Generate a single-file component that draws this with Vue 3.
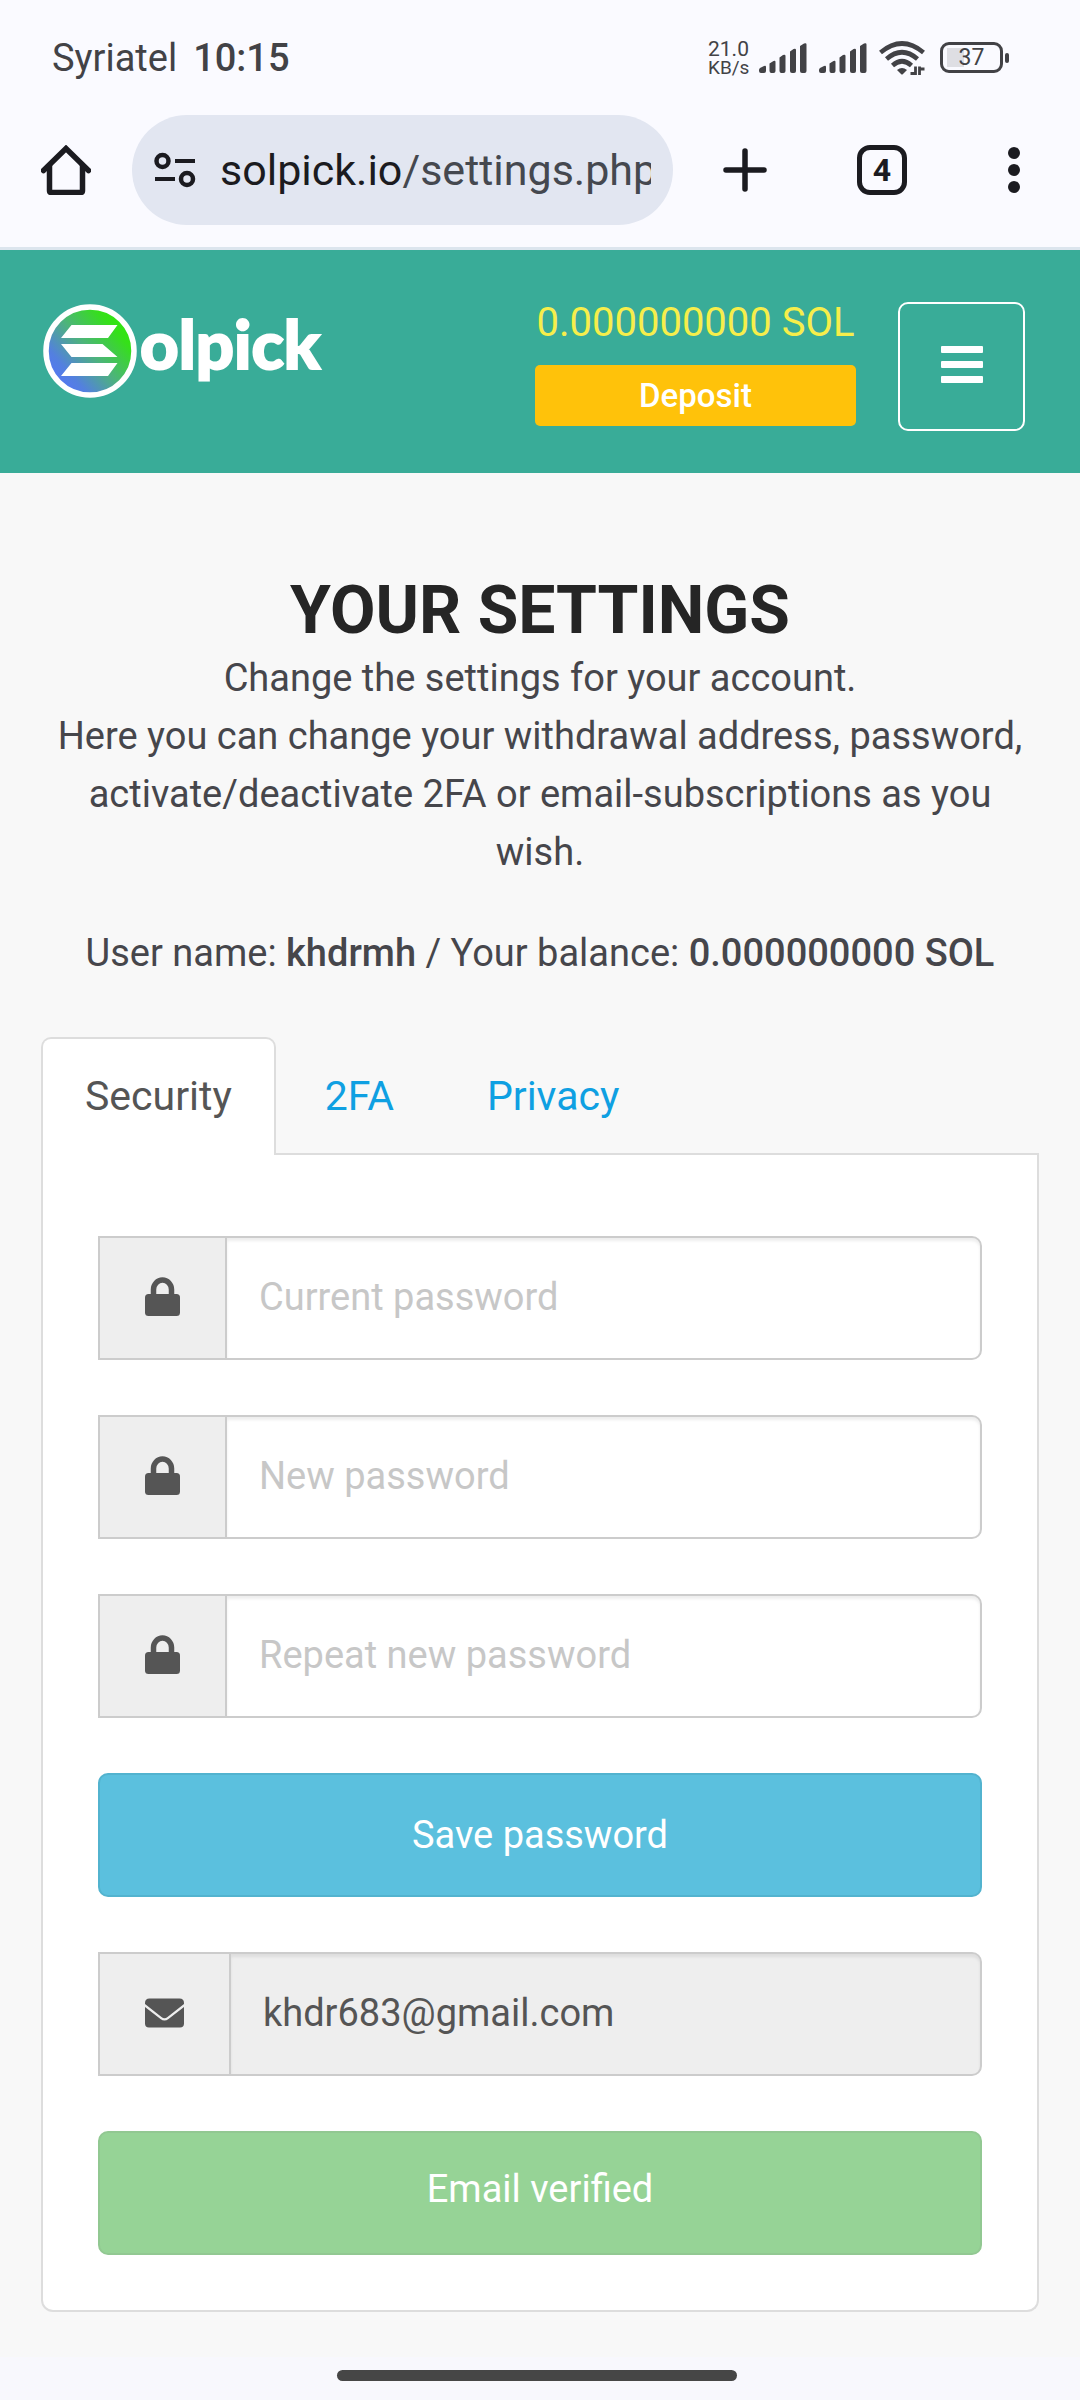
<script setup>
import { ref } from 'vue'

const tabs = ['Security', '2FA', 'Privacy']
const activeTab = ref('Security')

const passwordFields = [
  { id: 'current', label: 'Current password' },
  { id: 'new', label: 'New password' },
  { id: 'repeat', label: 'Repeat new password' },
]
</script>

<template>
  <div class="screen">
    <div class="status">
      <span class="carrier">Syriatel</span>
      <span class="clock">10:15</span>
      <div class="indicators">
        <div class="speed"><span class="rate">21.0</span><span class="unit">KB/s</span></div>
        <svg v-for="n in 2" :key="n" class="signal" width="48" height="30" viewBox="0 0 48 30" fill="#424246">
          <path d="M0 27q0-1 1-2l4-2q2-1 2 1v4q0 2-2 2H2q-2 0-2-2zM10.500 20.500l4-2.500q2-1 2 1v9q0 2-2 2h-2q-2 0-2-2zM20.500 14.500l3.500-2.500q2.500-1 2.500 1v15q0 2-2 2h-2q-2 0-2-2zM31 8.500l3.500-2.500q2.500-1 2.500 1v21q0 2-2 2h-2q-2 0-2-2zM41 3l4-2.500q2.500-1 2.500 1V28q0 2-2 2H43q-2 0-2-2z" />
        </svg>
        <svg class="wifi" width="46" height="34" viewBox="0 0 46 34">
          <g fill="none" stroke="#424246" stroke-width="4.600">
            <path d="M1.500 11.500Q23-6.500 44.500 11.500" />
            <path d="M7.500 18Q23 4.500 38.500 18" />
            <path d="M13.500 24.500Q23 16 32.500 24.500" />
          </g>
          <path d="M18 29q5-4 10 0l-4 4q-1 1-2 0z" fill="#424246" />
          <path d="M36.500 34V25.500M40.500 25.500V34M36.500 32.500h-5M40.500 28h5" stroke="#424246" stroke-width="2.800" fill="none" />
        </svg>
        <div class="battery"><span class="cell">37</span><span class="nub"></span></div>
      </div>
    </div>

    <div class="toolbar">
      <button class="plain home" aria-label="Home">
        <svg width="50" height="50" viewBox="0 0 50 50" fill="none" stroke="#1b1b20" stroke-width="5.500">
          <path d="M8.500 20V45.500q0 2 2 2h29q2 0 2-2V20" />
          <path d="M2.500 25.500L25 3.500 47.500 25.500" stroke-linecap="round" />
        </svg>
      </button>
      <div class="address">
        <svg class="tune" width="42" height="36" viewBox="0 0 42 36" fill="none" stroke="#1b1b20">
          <circle cx="8.500" cy="9" r="6" stroke-width="4.500" />
          <circle cx="33" cy="27" r="6" stroke-width="4.500" />
          <path d="M21 9h20M1 27h20" stroke-width="4" />
        </svg>
        <span class="url">solpick.io<span class="path">/settings.php</span></span>
      </div>
      <button class="plain add" aria-label="New tab">
        <svg width="44" height="44" viewBox="0 0 44 44" stroke="#1b1b20" stroke-width="5.500" stroke-linecap="round"><path d="M22 3v38M3 22h38" /></svg>
      </button>
      <button class="count" aria-label="Open tabs">4</button>
      <button class="plain more" aria-label="More">
        <svg width="12" height="46" viewBox="0 0 12 46" fill="#1b1b20"><circle cx="6" cy="6" r="6" /><circle cx="6" cy="23" r="6" /><circle cx="6" cy="40" r="6" /></svg>
      </button>
    </div>

    <header class="site-header">
      <a href="#" class="logo" aria-label="Solpick">
        <svg width="286" height="96" viewBox="0 0 286 96">
          <defs>
            <linearGradient id="sol" x1="0.100" y1="0.850" x2="0.900" y2="0.150">
              <stop offset="0" stop-color="#5577f5" />
              <stop offset="0.180" stop-color="#5380df" />
              <stop offset="0.500" stop-color="#4db37c" />
              <stop offset="0.850" stop-color="#35e019" />
              <stop offset="1" stop-color="#2fe80c" />
            </linearGradient>
          </defs>
          <circle cx="47" cy="49" r="44" fill="url(#sol)" stroke="#fff" stroke-width="5.500" />
          <path d="M28.500 23h46L65 36H18zM18 42h41.500l15 13h-46zM28.500 61h46L65 74H18z" fill="#fff" />
          <text x="97" y="67" class="wordmark">olpick</text>
        </svg>
      </a>
      <div class="wallet">
        <span class="amount">0.000000000 SOL</span>
        <button class="deposit">Deposit</button>
      </div>
      <button class="menu" aria-label="Menu"><span></span><span></span><span></span></button>
    </header>

    <main>
      <h1>YOUR SETTINGS</h1>
      <p class="intro">
        Change the settings for your account.<br />Here you can change your withdrawal address, password, activate/deactivate 2FA or email-subscriptions as you wish.
      </p>
      <p class="user">User name: <strong>khdrmh</strong> / Your balance: <strong>0.000000000 SOL</strong></p>

      <nav class="tabs">
        <a v-for="tab in tabs" :key="tab" href="#" :class="{ active: tab === activeTab }" @click.prevent="activeTab = tab">{{ tab }}</a>
      </nav>

      <form class="panel" @submit.prevent>
        <div v-for="field in passwordFields" :key="field.id" class="group">
          <label :for="field.id" :aria-label="field.label">
            <svg width="35" height="40" viewBox="0 0 35 40">
              <path d="M8.500 19V12.500a9 9.500 0 0 1 18 0V19" fill="none" stroke="#555" stroke-width="5.500" />
              <rect y="17" width="35" height="22" rx="3.500" fill="#555" />
            </svg>
          </label>
          <input :id="field.id" type="password" :placeholder="field.label" />
        </div>
        <button class="btn save">Save password</button>
        <div class="group">
          <label for="email" aria-label="Email">
            <svg width="39" height="30" viewBox="0 0 39 30" fill="#555">
              <path d="M0 5q0-4.500 4.500-4.500h30Q39 .5 39 5v1L22.500 19q-3 2.500-6 0L0 6z" />
              <path d="M0 9l15.500 12q4 3 8 0L39 9v16.500q0 4-4 4H4q-4 0-4-4z" />
            </svg>
          </label>
          <input id="email" type="email" value="khdr683@gmail.com" disabled />
        </div>
        <button class="btn verified" disabled>Email verified</button>
      </form>
    </main>

    <div class="gesture"><span></span></div>
  </div>
</template>

<style>
body {
  margin: 0;
  background: #f8f8f8;
}
</style>

<style scoped>
.screen,
.screen * {
  box-sizing: border-box;
}
.screen {
  display: flex;
  flex-direction: column;
  min-height: 100vh;
  font-family: Roboto, "Liberation Sans", sans-serif;
  font-size: 38px;
  line-height: 58px;
  color: #46464b;
  background: #f8f8f8;
}
button,
input {
  font: inherit;
  margin: 0;
}
svg {
  display: block;
  flex: none;
}
a {
  text-decoration: none;
}
.status {
  display: flex;
  align-items: center;
  height: 115px;
  padding: 0 71px 0 52px;
  background: #fafaff;
  color: #424246;
}
.clock {
  margin-left: 16px;
  font-weight: 500;
}
.indicators {
  display: flex;
  align-items: center;
  margin-left: auto;
}
.speed {
  display: flex;
  flex-direction: column;
  width: 42px;
  margin-right: 9px;
  white-space: nowrap;
}
.rate {
  font-size: 21px;
  line-height: 20px;
}
.unit {
  font-size: 19px;
  line-height: 18px;
}
.signal {
  margin-right: 12px;
}
.battery {
  display: flex;
  align-items: center;
  gap: 2px;
  margin-left: 15px;
}
.cell {
  width: 63px;
  height: 31px;
  border: 3px solid #424246;
  border-radius: 9px;
  background: linear-gradient(#dedee3, #dedee3) 4px center / 17px 19px no-repeat;
  font-size: 23px;
  line-height: 26px;
  text-align: center;
}
.nub {
  width: 4px;
  height: 10px;
  border-radius: 2px;
  background: #424246;
}
.toolbar {
  display: flex;
  align-items: center;
  padding: 0 60px 22px 41px;
  background: #fafaff;
  border-bottom: 3px solid #dce5ee;
}
.plain {
  padding: 0;
  border: 0;
  background: none;
}
.address {
  display: flex;
  align-items: center;
  flex: 1;
  min-width: 0;
  height: 110px;
  margin: 0 50px 0 41px;
  padding: 0 22px;
  border-radius: 55px;
  background: #e2e6f1;
}
.url {
  flex: 1;
  min-width: 0;
  margin-left: 24px;
  overflow: hidden;
  white-space: nowrap;
  font-size: 43px;
  color: #1b1b20;
}
.path {
  color: #45484f;
}
.count {
  width: 50px;
  height: 50px;
  margin: 0 101px 0 90px;
  padding: 0;
  border: 5px solid #1b1b20;
  border-radius: 13px;
  background: none;
  color: #1b1b20;
  font-size: 32px;
  font-weight: 700;
  line-height: 40px;
}
.site-header {
  display: flex;
  align-items: flex-start;
  padding: 52px 55px 42px 43px;
  background: #39ac98;
}
.wordmark {
  font-family: Lato, sans-serif;
  font-size: 67px;
  font-weight: 900;
  fill: #fff;
  stroke: #fff;
  stroke-width: 2px;
}
.wallet {
  display: flex;
  flex-direction: column;
  gap: 21px;
  min-width: 321px;
  margin: 0 42px 0 auto;
}
.amount {
  font-size: 40px;
  line-height: 42px;
  text-align: center;
  color: #f6ee4b;
}
.deposit {
  height: 61px;
  padding: 0;
  border: 0;
  border-radius: 5px;
  background: #ffc20a;
  color: #fff;
  font-size: 33px;
  font-weight: 500;
  line-height: 56px;
}
.menu {
  display: flex;
  flex-direction: column;
  align-items: center;
  justify-content: center;
  gap: 8px;
  width: 127px;
  height: 129px;
  padding: 0 0 4px;
  border: 2px solid #fff;
  border-radius: 10px;
  background: none;
}
.menu span {
  width: 42px;
  height: 7px;
  border-radius: 1px;
  background: #fff;
}
main {
  flex: 1;
  padding: 99px 41px 45px;
}
h1 {
  margin: 0;
  font-size: 66px;
  font-weight: 700;
  line-height: 78px;
  text-align: center;
  color: #252525;
}
p {
  margin: 0;
  text-align: center;
}
.intro {
  margin-top: -1px;
}
.user {
  margin: 43px 0 55px;
}
strong {
  font-weight: 500;
}
.tabs {
  display: flex;
  gap: 5px;
  border-bottom: 2px solid #ddd;
}
.tabs a {
  padding: 28px 42px 30px;
  margin-bottom: -2px;
  border: 2px solid transparent;
  border-bottom: 0;
  border-radius: 10px 10px 0 0;
  font-size: 41px;
  color: #0fa0e2;
}
.tabs .active {
  background: #fff;
  border-color: #ddd;
  color: #555;
}
.panel {
  display: flex;
  flex-direction: column;
  gap: 55px;
  padding: 81px 55px 55px;
  border: 2px solid #ddd;
  border-top: 0;
  border-radius: 0 0 12px 12px;
  background: #fff;
}
.group {
  display: flex;
  height: 124px;
}
.group label {
  display: flex;
  align-items: center;
  padding: 0 45px 2px;
  border: 2px solid #ccc;
  border-right: 0;
  background: #eee;
}
.group input {
  flex: 1;
  min-width: 0;
  padding: 0 32px 2px;
  border: 2px solid #ccc;
  border-radius: 0 10px 10px 0;
  background: #fff;
  box-shadow: inset 0 3px 3px rgba(0, 0, 0, 0.07);
  color: #555;
}
.group input::placeholder {
  color: #c7c7c7;
  opacity: 1;
}
.group input:disabled {
  background: #eee;
}
.btn {
  height: 124px;
  border: 2px solid;
  border-radius: 10px;
  color: #fff;
}
.save {
  padding: 0;
  border-color: #52b3cf;
  background: #5bc0de;
}
.verified {
  padding: 0 0 8px;
  border-color: #92c892;
  background: #96d396;
}
.gesture {
  display: flex;
  justify-content: center;
  height: 43px;
  padding: 13px 7px 0 0;
  background: #f8f8fd;
}
.gesture span {
  width: 400px;
  height: 11px;
  border-radius: 6px;
  background: #464646;
}
</style>
